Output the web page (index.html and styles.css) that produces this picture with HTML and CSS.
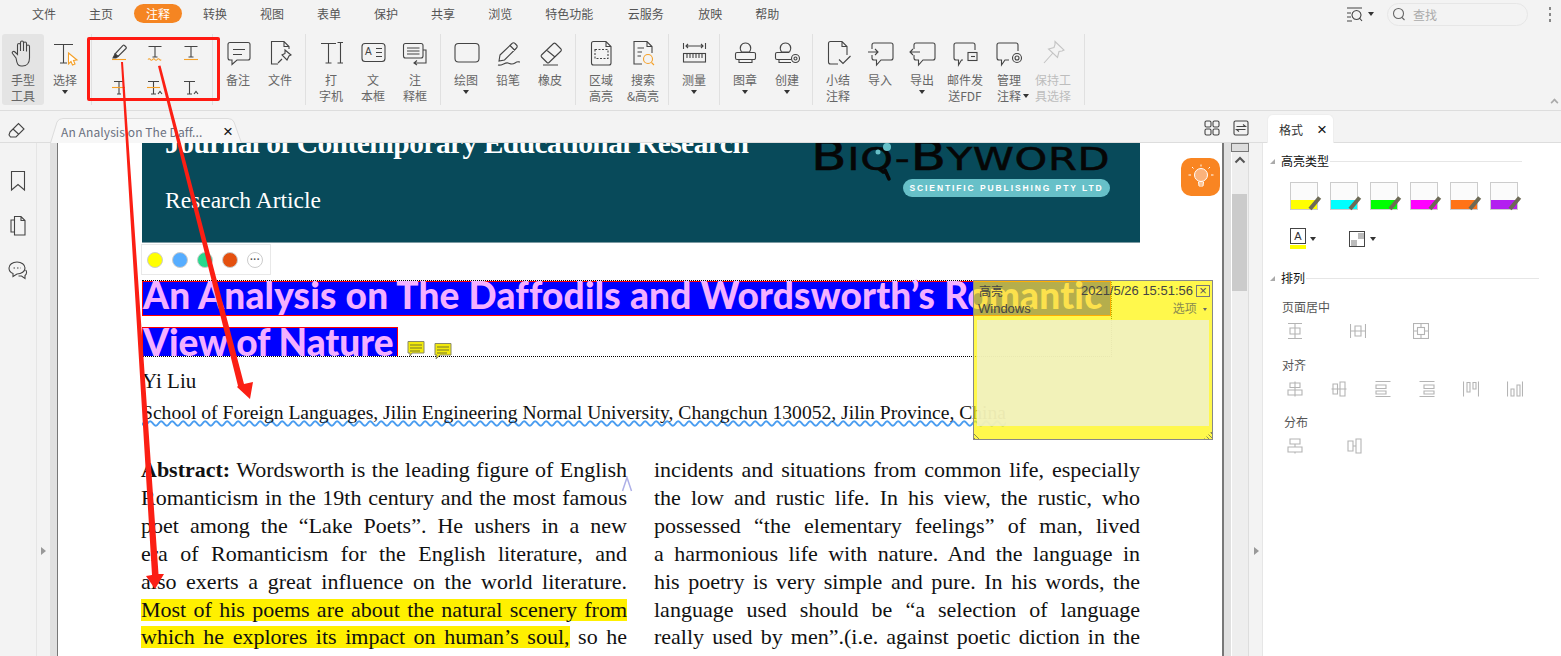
FILE: index.html
```html
<!DOCTYPE html>
<html lang="zh-CN">
<head>
    <meta charset="UTF-8">
    <title>PDF 注释</title>
    <link rel="stylesheet" href="styles.css">
</head>
<body>
    <div class="menu-bar">
        <span class="menu-item">文件</span>
        <span class="menu-item">主页</span>
        <span class="menu-item active">注释</span>
        <span class="menu-item">转换</span>
        <span class="menu-item">视图</span>
        <span class="menu-item">表单</span>
        <span class="menu-item">保护</span>
        <span class="menu-item">共享</span>
        <span class="menu-item">浏览</span>
        <span class="menu-item">特色功能</span>
        <span class="menu-item gap-more">云服务</span>
        <span class="menu-item gap-more">放映</span>
        <span class="menu-item">帮助</span>
        <div class="menu-right">
            <svg class="ico" width="17" height="16" viewBox="0 0 17 16"><path d="M1 2H16M1 7H5M1 11H5M1 15H6M10.500 4.500a4.500 4.500 0 1 0 .01 0M13.500 12L16 15"/></svg>
            <span class="caret"></span>
            <div class="search-box">
                <svg class="ico" width="14" height="14" viewBox="0 0 14 14"><circle cx="6.500" cy="6.500" r="5"/><path d="M10 10.500L12.500 13"/></svg>
                <span>查找</span>
            </div>
            <span class="more-dots"><i></i><i></i><i></i></span>
        </div>
    </div>

    <div class="ribbon">
        <div class="rb-group first">
            <div class="rb-item pressed">
                <svg class="ico" width="32" height="32" viewBox="0 0 32 32"><path d="M9 21L5.500 16.500c-1-1.500 1-3 2.500-1.500L10.500 17.500V8c0-2 3-2 3 0v6V5.500c0-2 3-2 3 0V14V6.500c0-2 3-2 3 0V14.500V9.500c0-2 3-2 3 0V21c0 5-3 8-7 8H14c-3 0-4-2-5-8z"/></svg>
                <span>手型<br>工具</span>
            </div>
            <div class="rb-item">
                <svg class="ico" width="32" height="32" viewBox="0 0 32 32"><path d="M5 7.500H24M14.500 7.500V26M11 26H18"/><path class="orange" fill="#fff" d="M19.500 16L28 23L24.500 23.500L26 27L23.500 28L22 24.500L19.500 27z"/></svg>
                <span>选择</span>
                <span class="caret"></span>
            </div>
        </div>
        <div class="rb-group hl-grid">
            <div class="hl-cell"><svg class="ico" width="24" height="24" viewBox="0 0 24 24"><path d="M8 14L16 5.500a1 1 0 0 1 1.500 0l1.500 1.500a1 1 0 0 1 0 1.500L11 16.500z"/><path fill="#333" d="M6 18L8 14L11 16.500L9 18z"/><path class="orange" d="M5 19.500H19"/></svg></div>
            <div class="hl-cell"><svg class="ico" width="24" height="24" viewBox="0 0 24 24"><path d="M5.500 6.500H18.500M12 6.500V17M9.500 17H14.500"/><path class="orange" d="M5 19.500q1.200-1.500 2.300 0t2.300 0t2.300 0t2.300 0t2.300 0t1.500 0"/></svg></div>
            <div class="hl-cell"><svg class="ico" width="24" height="24" viewBox="0 0 24 24"><path d="M5.500 6.500H18.500M12 6.500V17M9.500 17H14.500"/><path class="orange" d="M5 19.500H19"/></svg></div>
            <div class="hl-cell"><svg class="ico" width="24" height="24" viewBox="0 0 24 24"><path d="M7 5.500H17M12 5.500V18M10 18H14"/><path class="orange" d="M5 11.500H18"/></svg></div>
            <div class="hl-cell"><svg class="ico" width="24" height="24" viewBox="0 0 24 24"><path d="M5 5.500H16M10.500 5.500V18M8 18H13"/><path class="orange" d="M4 11.500H17"/><path d="M15 18L17 15.500L19 18"/></svg></div>
            <div class="hl-cell"><svg class="ico" width="24" height="24" viewBox="0 0 24 24"><path d="M5 5.500H16M10.500 5.500V18M8 18H13"/><path d="M15 18L17 15.500L19 18"/></svg></div>
        </div>
        <div class="rb-group">
            <div class="rb-item">
                <svg class="ico" width="32" height="32" viewBox="0 0 32 32"><path d="M8 5.500H26a2 2 0 0 1 2 2V21a2 2 0 0 1-2 2H15L10 27.500V23H8a2 2 0 0 1-2-2V7.500a2 2 0 0 1 2-2zM11 12.500H23M11 17.500H20"/></svg>
                <span>备注</span>
            </div>
            <div class="rb-item">
                <svg class="ico" width="32" height="32" viewBox="0 0 32 32"><path d="M14 27H7.500V4.500H20l5 5V12M20 4.500V9.500H25"/><path d="M21 13l6 5-2 1-2 4-5-5 3-1.500zM18 22l-4 4"/></svg>
                <span>文件</span>
            </div>
        </div>
        <div class="rb-group">
            <div class="rb-item">
                <svg class="ico" width="32" height="32" viewBox="0 0 32 32"><path d="M6 6.500H21M13.500 6.500V26M10.500 26H16.500M22.500 5.500H28M25.500 5.500V26M22.500 26H28"/></svg>
                <span>打<br>字机</span>
            </div>
            <div class="rb-item">
                <svg class="ico" width="32" height="32" viewBox="0 0 32 32"><rect x="5" y="6.500" width="23" height="18" rx="3"/><path d="M19 11.500H25M19 15.500H25M19 19.500H25"/><text class="ico-letter" x="8" y="18">A</text></svg>
                <span>文<br>本框</span>
            </div>
            <div class="rb-item">
                <svg class="ico" width="32" height="32" viewBox="0 0 32 32"><path d="M6.500 6.500H22a2 2 0 0 1 2 2V19a2 2 0 0 1-2 2H6.500a2 2 0 0 1-2-2V8.500a2 2 0 0 1 2-2zM8 11H20.500M8 14H20.500M8 17H20.500"/><path d="M24 13H27V26H15M18 23.500L15 26L18 28"/></svg>
                <span>注<br>释框</span>
            </div>
        </div>
        <div class="rb-group">
            <div class="rb-item">
                <svg class="ico" width="32" height="32" viewBox="0 0 32 32"><rect x="5" y="6.500" width="24" height="18.500" rx="3.500"/></svg>
                <span>绘图</span>
                <span class="caret"></span>
            </div>
            <div class="rb-item">
                <svg class="ico" width="32" height="32" viewBox="0 0 32 32"><path d="M8 18L20 6.500a2 2 0 0 1 3 0L24.500 8a2 2 0 0 1 0 3L12.500 23L7 24zM18 8.500L23 13.500M6 28c4 1 7-3 10-2s4 2 7 0s3-1 5-1"/></svg>
                <span>铅笔</span>
            </div>
            <div class="rb-item">
                <svg class="ico" width="32" height="32" viewBox="0 0 32 32"><path d="M7.500 18L19.500 6.500a1.500 1.500 0 0 1 2 0L27 12a1.500 1.500 0 0 1 0 2L15 25.500a1.500 1.500 0 0 1-2 0L7.500 20a1.500 1.500 0 0 1 0-2zM12.500 13L21 20M9 28H24"/></svg>
                <span>橡皮</span>
            </div>
        </div>
        <div class="rb-group">
            <div class="rb-item">
                <svg class="ico" width="32" height="32" viewBox="0 0 32 32"><path d="M8.500 4.500H21l5 5V26a2 2 0 0 1-2 2H8.500a2 2 0 0 1-2-2V6.500a2 2 0 0 1 2-2zM21 4.500V9.500H26"/><rect x="10" y="12.500" width="13" height="9" stroke-dasharray="2 1.500"/></svg>
                <span>区域<br>高亮</span>
            </div>
            <div class="rb-item">
                <svg class="ico" width="32" height="32" viewBox="0 0 32 32"><path d="M15 27H7V4.500H20l5 5V16M20 4.500V9.500H25M10.500 11H17M10.500 15H15M10.500 19H14"/><circle class="orange" cx="21" cy="22" r="4.500"/><path class="orange" d="M24.500 25.500L27 28"/></svg>
                <span>搜索<br>&amp;高亮</span>
            </div>
        </div>
        <div class="rb-group">
            <div class="rb-item">
                <svg class="ico" width="32" height="32" viewBox="0 0 32 32"><path d="M5.500 6V12M27.500 6V12M8 9H25M10 7L8 9L10 11M23 7L25 9L23 11"/><rect x="5.500" y="16.500" width="22" height="8.500"/><path d="M9 16.500V21M12 16.500V21M15 16.500V21M18 16.500V21M21 16.500V21M24 16.500V21"/></svg>
                <span>测量</span>
                <span class="caret"></span>
            </div>
        </div>
        <div class="rb-group">
            <div class="rb-item">
                <svg class="ico" width="32" height="32" viewBox="0 0 32 32"><path d="M12.500 15c-3-5 0-9 4-9s7 4 4 9zM8 15.500H25a1.500 1.500 0 0 1 1.500 1.500V21a1.500 1.500 0 0 1-1.500 1.500H8a1.500 1.500 0 0 1-1.500-1.500V17a1.500 1.500 0 0 1 1.500-1.500zM10 22.500V25.500H23V22.500"/></svg>
                <span>图章</span>
                <span class="caret"></span>
            </div>
            <div class="rb-item">
                <svg class="ico" width="32" height="32" viewBox="0 0 32 32"><path d="M10.500 15c-3-5 0-9 4-9s7 4 4 9zM18 15.500H6a1.500 1.500 0 0 0-1.500 1.500V21a1.500 1.500 0 0 0 1.500 1.500H20M8 22.500V25.500H20"/><circle cx="24.500" cy="21.500" r="4"/><circle cx="24.500" cy="21.500" r="1.500"/></svg>
                <span>创建</span>
                <span class="caret"></span>
            </div>
        </div>
        <div class="rb-group last">
            <div class="rb-item">
                <svg class="ico" width="32" height="32" viewBox="0 0 32 32"><path d="M16 27H8.500a2 2 0 0 1-2-2V6.500a2 2 0 0 1 2-2H20l5 5V18M20 4.500V9.500H25M17 22.500L21 26.500L28.500 19"/></svg>
                <span>小结<br>注释</span>
            </div>
            <div class="rb-item">
                <svg class="ico" width="32" height="32" viewBox="0 0 32 32"><path d="M8 12V8a2 2 0 0 1 2-2H27a2 2 0 0 1 2 2V21a2 2 0 0 1-2 2H17L12.500 28V23H10a2 2 0 0 1-2-2V18M4 15H14M11 12L14 15L11 18"/></svg>
                <span>导入</span>
            </div>
            <div class="rb-item">
                <svg class="ico" width="32" height="32" viewBox="0 0 32 32"><path d="M8 12V8a2 2 0 0 1 2-2H27a2 2 0 0 1 2 2V21a2 2 0 0 1-2 2H17L12.500 28V23H10a2 2 0 0 1-2-2V18M4 15H14M7 12L4 15L7 18"/></svg>
                <span>导出</span>
                <span class="caret"></span>
            </div>
            <div class="rb-item wide">
                <svg class="ico" width="32" height="32" viewBox="0 0 32 32"><path d="M14 23H12.500L9.500 28V23H7a2 2 0 0 1-2-2V8a2 2 0 0 1 2-2H24a2 2 0 0 1 2 2V13"/><rect x="19" y="15.500" width="9" height="8"/><path d="M22 19.500H26"/></svg>
                <span>邮件发<br>送FDF</span>
            </div>
            <div class="rb-item wide">
                <svg class="ico" width="32" height="32" viewBox="0 0 32 32"><path d="M16 23H12L8.500 28V23H6a2 2 0 0 1-2-2V8a2 2 0 0 1 2-2H23a2 2 0 0 1 2 2V14"/><circle cx="24" cy="21" r="4.500"/><circle cx="24" cy="21" r="2"/></svg>
                <span>管理<br>注释</span>
                <span class="caret inline"></span>
            </div>
            <div class="rb-item wide disabled">
                <svg class="ico pale" width="32" height="32" viewBox="0 0 32 32"><path d="M18 4.500L27 13L25 14L22 14.500L20.500 20.500L11.500 12L17 10.500L18 7.500zM15.500 16.500L7 26"/></svg>
                <span>保持工<br>具选择</span>
            </div>
        </div>
        <span class="ribbon-collapse"></span>
    </div>

    <div class="tab-row">
        <svg class="ico eraser" width="20" height="20" viewBox="0 0 20 20"><path d="M3 12L11.500 3.500L17 9L9 17H3.500L2 15zM6 9L12 14.500"/></svg>
        <div class="doc-tab">
            <svg class="doc-tab-shape" width="192" height="25" viewBox="0 0 192 25"><path d="M.5 25L7 4Q8.500 .5 13 .5H178Q182.500 .5 184 4L191.500 25"/></svg>
            <span class="doc-tab-title">An Analysis on The Daff...</span>
            <span class="tab-x">×</span>
        </div>
        <div class="tab-row-right">
            <svg class="ico" width="16" height="16" viewBox="0 0 16 16"><rect x="1" y="1" width="6" height="6" rx="1.500"/><rect x="9" y="1" width="6" height="6" rx="1.500"/><rect x="1" y="9" width="6" height="6" rx="1.500"/><rect x="9" y="9" width="6" height="6" rx="1.500"/></svg>
            <svg class="ico" width="16" height="16" viewBox="0 0 16 16"><rect x="1" y="1" width="14" height="14" rx="1.500"/><path d="M3.500 6.500H12.500L10 4.500M12.500 9.500H3.500L6 11.500"/></svg>
            <div class="side-tab"><span>格式</span><span class="tab-x">×</span></div>
        </div>
    </div>

    <div class="main">
        <div class="left-rail">
            <svg class="ico" width="18" height="22" viewBox="0 0 18 22"><path d="M2.500 1.500H15.500V20L9 14.500L2.500 20z"/></svg>
            <svg class="ico" width="18" height="22" viewBox="0 0 18 22"><path d="M5.500 17H2V5H5.500M5.500 1.500H12L16 5.500V20H5.500zM12 1.500V5.500H16"/></svg>
            <svg class="ico" width="20" height="20" viewBox="0 0 20 20"><path d="M9 2c4.500 0 8 2.500 8 6s-3.500 6-8 6L5 16.500V13.500C2.500 12.500 1 10.500 1 8C1 4.500 4.500 2 9 2zM17.500 10c1.500 1 1.500 4-.5 5.500V18.500L13.500 16H10.500"/><path stroke-dasharray="1.500 2" d="M5.500 8H13"/></svg>
        </div>
        <div class="side-handle"><span class="tri"></span></div>
        <div class="gutter"></div>

        <div class="page">
            <div class="banner">
                <div class="banner-left">
                    <div class="journal-title">Journal of Contemporary Educational Research</div>
                    <div class="article-type">Research Article</div>
                </div>
                <div class="banner-logo">
                    <div class="logo-name"><b>B</b>IQ-<b>B</b>YWORD</div>
                    <div class="logo-pill">SCIENTIFIC PUBLISHING PTY LTD</div>
                </div>
            </div>

            <svg class="logo-lens" width="30" height="42" viewBox="0 0 30 42"><circle cx="17" cy="4" r="4" fill="#67c0c8"/><circle cx="8" cy="9" r="2.500" fill="#67c0c8"/><path d="M15 27L19 36" stroke="#060606" stroke-width="3.500" stroke-linecap="round"/></svg>

            <div class="title-box">
                <div class="title-line full">An Analysis on The Daffodils and Wordsworth’s Romantic</div>
                <div class="title-row2">
                    <div class="title-line">View of Nature</div>
                    <svg class="note-mark" width="20" height="18" viewBox="0 0 20 18"><path d="M2 1.500H18V13H6L4 16V13H2z"/><path class="note-lines" d="M4 5H16M4 8H16M4 11H14"/></svg>
                    <svg class="note-mark second" width="20" height="18" viewBox="0 0 20 18"><path d="M2 1.500H18V13H7L3 17L4 13H2z"/><path class="note-lines" d="M4 5H16M4 8H16M4 11H14"/></svg>
                </div>
            </div>

            <div class="author">Yi Liu</div>
            <div class="affil">School of Foreign Languages, Jilin Engineering Normal University, Changchun 130052, Jilin Province, China</div>

            <div class="columns">
                <div class="col">
                    <div class="ln"><b>Abstract:</b> Wordsworth is the leading figure of English</div>
                    <div class="ln">Romanticism in the 19th century and the most famous</div>
                    <div class="ln">poet among the “Lake Poets”. He ushers in a new</div>
                    <div class="ln">era of Romanticism for the English literature, and</div>
                    <div class="ln">also exerts a great influence on the world literature.</div>
                    <div class="ln"><span class="hl">Most of his poems are about the natural scenery from</span></div>
                    <div class="ln"><span class="hl">which he explores its impact on human’s soul,</span> so he</div>
                </div>
                <div class="col">
                    <div class="ln">incidents and situations from common life, especially</div>
                    <div class="ln">the low and rustic life. In his view, the rustic, who</div>
                    <div class="ln">possessed “the elementary feelings” of man, lived</div>
                    <div class="ln">a harmonious life with nature. And the language in</div>
                    <div class="ln">his poetry is very simple and pure. In his words, the</div>
                    <div class="ln">language used should be “a selection of language</div>
                    <div class="ln">really used by men”.(i.e. against poetic diction in the</div>
                </div>
            </div>

            <div class="color-chips">
                <span class="chip c-yellow"></span>
                <span class="chip c-blue"></span>
                <span class="chip c-green"></span>
                <span class="chip c-red"></span>
                <span class="chip c-more">···</span>
            </div>

            <div class="bulb-btn">
                <svg width="30" height="30" viewBox="0 0 30 30"><circle cx="15" cy="13" r="6.500" fill="#fbb27a" stroke="#fff"/><path d="M12.500 20H17.500L17 24H13zM13 22H17M15 2.500V4.500M6 5L7.500 6.500M24 5L22.500 6.500M2.500 13H5M25 13H27.500" fill="none" stroke="#fff"/></svg>
            </div>

            <svg class="insert-mark" width="12" height="16" viewBox="0 0 12 16"><path d="M1.500 15L6 1.500L10.500 15" fill="none" stroke="#aeb0e8" stroke-width="1.500"/></svg>

            <div class="popup-note">
                <div class="note-head">
                    <div class="note-head-top"><span>高亮</span><span class="note-date">2021/5/26 15:51:56</span><span class="note-close">×</span></div>
                    <div class="note-head-sub"><span>Windows</span><span class="note-opts">选项 <i class="caret"></i></span></div>
                </div>
                <div class="note-body"></div>
            </div>
        </div>

        <div class="gutter right"></div>
        <div class="vscroll">
            <span class="vs-top"></span>
            <svg class="vs-up" width="12" height="8" viewBox="0 0 12 8"><path d="M1.500 6.500L6 2L10.500 6.500" fill="none" stroke="#555" stroke-width="2"/></svg>
            <div class="vs-thumb"></div>
        </div>
        <div class="side-handle alt"><span class="tri"></span></div>

        <div class="panel">
            <div class="sec-head"><span class="sec-tri"></span><span class="sec-title">高亮类型</span><span class="sec-line short"></span></div>
            <div class="swatches">
                <div class="swatch"><i class="sw-yellow"></i></div>
                <div class="swatch"><i class="sw-cyan"></i></div>
                <div class="swatch"><i class="sw-lime"></i></div>
                <div class="swatch"><i class="sw-pink"></i></div>
                <div class="swatch"><i class="sw-orange"></i></div>
                <div class="swatch"><i class="sw-purple"></i></div>
            </div>
            <div class="text-tools">
                <div class="a-tool"><span class="a-box">A</span><span class="a-bar"></span></div>
                <span class="caret"></span>
                <div class="shade-tool"><i></i><i></i></div>
                <span class="caret"></span>
            </div>

            <div class="sec-head arrange"><span class="sec-tri"></span><span class="sec-title">排列</span><span class="sec-line"></span></div>
            <div class="sub-title">页面居中</div>
            <div class="align-row page-center">
                <svg class="ico grey" width="16" height="16" viewBox="0 0 16 16"><path d="M1 .5H15M1 15.500H15M8 .5V15.500M3 5H13V11H3z"/></svg>
                <svg class="ico grey" width="16" height="16" viewBox="0 0 16 16"><path d="M.5 1V15M15.500 1V15M.5 8H15.500M5 3H11V13H5z"/></svg>
                <svg class="ico grey" width="16" height="16" viewBox="0 0 16 16"><rect x=".5" y=".5" width="15" height="15"/><rect x="4.500" y="4.500" width="7" height="7"/><path d="M8 .5V4.500M8 11.500V15.500M.5 8H4.500M11.500 8H15.500"/></svg>
            </div>
            <div class="sub-title second">对齐</div>
            <div class="align-row six">
                <svg class="ico grey" width="16" height="16" viewBox="0 0 16 16"><path d="M8 .5V15.500M3 2H13V6.500H3zM1 9H15V14H1z"/></svg>
                <svg class="ico grey" width="16" height="16" viewBox="0 0 16 16"><path d="M.5 8H15.500M2 3H6.500V13H2zM9 1H14V15H9z"/></svg>
                <svg class="ico grey" width="16" height="16" viewBox="0 0 16 16"><path d="M.5 .5H15.500M.5 15.500H15.500M1 4H11V7.500H1zM1 10H11V13H1z"/></svg>
                <svg class="ico grey" width="16" height="16" viewBox="0 0 16 16"><path d="M.5 .5H15.500M.5 15.500H15.500M5 4H15V7.500H5zM5 10H15V13H5z"/></svg>
                <svg class="ico grey" width="16" height="16" viewBox="0 0 16 16"><path d="M.5 .5V15.500M15.500 .5V15.500M4 1.500H7V11H4zM10 1.500H13V8H10z"/></svg>
                <svg class="ico grey" width="16" height="16" viewBox="0 0 16 16"><path d="M.5 .5V15.500M15.500 .5V15.500M4 8H7V15H4zM10 4H13V15H10z"/></svg>
            </div>
            <div class="sub-title dist">分布</div>
            <div class="align-row dist-row">
                <svg class="ico grey" width="16" height="16" viewBox="0 0 16 16"><path d="M3 1H13V6H3zM1 9H15V14H1zM8 6V9M8 14V15.500"/></svg>
                <svg class="ico grey" width="16" height="16" viewBox="0 0 16 16"><path d="M1 3H6V13H1zM9 1H14V15H9zM6 8H9"/></svg>
            </div>
        </div>
    </div>

    <!-- red marks drawn over the whole screenshot -->
    <div class="red-box"></div>
    <svg class="red-arrows" width="1561" height="656" viewBox="0 0 1561 656">
        <path d="M121 62L123 62L158.500 574L164 574L155 589L146 576L152 575z"/>
        <path d="M158 66L160.500 65.500L244 384L253 382L250 399L237 387L238 386z"/>
    </svg>
</body>
</html>
```

FILE: styles.css
```css
* {
    box-sizing: border-box;
}
html, body {
    margin: 0;
    height: 656px;
    overflow: hidden;
}
body {
    position: relative;
    display: flex;
    flex-direction: column;
    background-color: #f3f3f3;
    color: #555;
    font-family: "Noto Sans CJK SC", "Liberation Sans", sans-serif;
    font-size: 12px;
}
.ico {
    display: block;
    flex-shrink: 0;
    fill: none;
    stroke: #444;
    stroke-width: 1.1;
}
.ico .orange {
    stroke: #f5a028;
}
.ico.pale {
    stroke: #c4c4c4;
}
.ico.grey {
    stroke: #b4b4b4;
}
.ico-letter {
    font: 10px "Liberation Sans", sans-serif;
    fill: #444;
    stroke: none;
}
.caret {
    display: inline-block;
    width: 0;
    height: 0;
    border-left: 3.5px solid transparent;
    border-right: 3.5px solid transparent;
    border-top: 4px solid #333;
}

/* menu */
.menu-bar {
    height: 28px;
    display: flex;
    align-items: center;
    gap: 33px;
    padding: 0 0 2px 32px;
    flex-shrink: 0;
}
.menu-item {
    line-height: 19px;
}
.menu-item.active {
    background-color: #f58522;
    color: #fff;
    border-radius: 10px;
    padding: 0 12px;
    margin: 0 -12px;
}
.menu-item.gap-more {
    margin-left: 1.500px;
}
.menu-right {
    margin-left: auto;
    display: flex;
    align-items: center;
    padding: 2px 10px 0 0;
}
.menu-right .caret {
    margin-left: 5px;
}
.search-box {
    width: 141px;
    height: 23px;
    margin-left: 13px;
    border: 1px solid #e6e6e6;
    border-radius: 12px;
    display: flex;
    align-items: center;
    gap: 7px;
    padding-left: 4px;
    color: #aaa;
}
.search-box .ico {
    stroke: #666;
}
.more-dots {
    display: flex;
    flex-direction: column;
    gap: 3px;
    margin-left: 21px;
}
.more-dots i {
    width: 2px;
    height: 3px;
    background-color: #888;
}

/* ribbon */
.ribbon {
    height: 83px;
    flex-shrink: 0;
    display: flex;
    align-items: flex-start;
    padding: 6px 0 0 2px;
    border-bottom: 1px solid #ddd;
    position: relative;
    color: #666;
}
.rb-group {
    display: flex;
    height: 71px;
    padding: 0 4px;
    border-right: 1px solid #e0e0e0;
}
.rb-group.first {
    padding: 0 5px 0 0;
}
.rb-group.last {
    padding-right: 9px;
}
.rb-item {
    width: 42px;
    height: 71px;
    padding-top: 3px;
    display: flex;
    flex-direction: column;
    align-items: center;
    line-height: 16px;
    text-align: center;
    flex-shrink: 0;
}
.rb-item > span:not(.caret) {
    margin-top: 3px;
    white-space: nowrap;
}
.rb-item > .caret {
    margin-top: 2px;
}
.rb-item > .caret.inline {
    position: absolute;
    margin: 57px 0 0 33px;
}
.rb-item.wide {
    width: 44px;
}
.rb-item.pressed {
    background-color: #e4e4e4;
    border-radius: 3px;
}
.rb-item.disabled {
    color: #bdbdbd;
}
.hl-grid {
    width: 121px;
    padding: 0 0 0 9px;
    display: grid;
    grid-template-columns: repeat(3, 36px);
    grid-template-rows: repeat(2, 36px);
}
.hl-cell {
    display: flex;
    align-items: center;
    justify-content: center;
    margin-top: -1px;
}
.ribbon-collapse {
    position: absolute;
    right: 3px;
    bottom: 4px;
    width: 7px;
    height: 7px;
    border-left: 2px solid #aaa;
    border-top: 2px solid #aaa;
    transform: rotate(45deg) scale(.8);
}

/* tab row */
.tab-row {
    height: 32px;
    flex-shrink: 0;
    display: flex;
    align-items: flex-end;
    border-bottom: 1px solid #ddd;
    position: relative;
}
.eraser {
    position: absolute;
    left: 7px;
    top: 9px;
}
.doc-tab {
    position: relative;
    width: 192px;
    height: 25px;
    margin-left: 50px;
    margin-bottom: -1px;
    display: flex;
    align-items: center;
    padding: 2px 0 0 11px;
    color: #6a7080;
    white-space: nowrap;
}
.doc-tab-shape {
    position: absolute;
    left: 0;
    top: 0;
    fill: #f7f7f7;
    stroke: #dcdcdc;
}
.doc-tab-title {
    position: relative;
    letter-spacing: .1px;
}
.tab-x {
    position: relative;
    font-family: "Liberation Sans", sans-serif;
    font-size: 17px;
    line-height: 1;
    color: #111;
    margin-left: auto;
    margin-right: 9px;
}
.tab-row-right {
    margin-left: auto;
    display: flex;
    align-items: center;
    padding: 3px 227px 0 0;
    height: 100%;
    gap: 13px;
}
.side-tab {
    width: 67px;
    height: 29px;
    align-self: flex-end;
    margin-left: 5px;
    margin-bottom: -1px;
    background-color: #fff;
    border-radius: 6px 6px 0 0;
    border: 1px solid #eee;
    border-bottom: none;
    display: flex;
    align-items: center;
    padding-left: 11px;
    color: #333;
}
.side-tab .tab-x {
    margin-right: 6px;
}

/* main area */
.main {
    flex: 1;
    display: flex;
    min-height: 0;
}
.left-rail {
    width: 37px;
    flex-shrink: 0;
    border-right: 1px solid #e5e5e5;
    display: flex;
    flex-direction: column;
    align-items: center;
    gap: 23px;
    padding-top: 27px;
}
.side-handle {
    width: 13px;
    flex-shrink: 0;
    display: flex;
    align-items: center;
    justify-content: center;
    padding-top: 312px;
    padding-bottom: 10px;
}
.side-handle.alt {
    border-right: 1px solid #e6e6e6;
    width: 14px;
    padding-left: 1px;
}
.tri {
    width: 0;
    height: 0;
    border-top: 4px solid transparent;
    border-bottom: 4px solid transparent;
    border-left: 5px solid #999;
}
.gutter {
    width: 7px;
    flex-shrink: 0;
    background-color: #e0e0e0;
}
.gutter.right {
    width: 8px;
    border-right: 1px solid #fff;
}
.page {
    width: 1167px;
    flex-shrink: 0;
    position: relative;
    overflow: hidden;
    background-color: #fff;
    border-left: 1px solid #777;
    border-right: 2px solid #777;
    padding-left: 84px;
    font-family: "Liberation Serif", serif;
    color: #111;
}
.banner {
    width: 998px;
    height: 100px;
    background-color: #084a5a;
    border-bottom: 1px solid #7c9aa2;
    display: flex;
    justify-content: space-between;
    color: #fff;
    overflow: hidden;
}
.banner-left {
    padding-left: 23px;
}
.journal-title {
    font-size: 29.500px;
    letter-spacing: -.55px;
    font-weight: bold;
    line-height: 34px;
    margin-top: -17px;
    white-space: nowrap;
}
.article-type {
    font-size: 23.500px;
    line-height: 28px;
    margin-top: 26px;
}
.banner-logo {
    width: 295px;
    margin-right: 30px;
    display: flex;
    flex-direction: column;
    align-items: flex-end;
}
.logo-name {
    font-family: "DejaVu Sans", sans-serif;
    font-size: 32px;
    line-height: 34px;
    margin-top: -4px;
    color: #060606;
    white-space: nowrap;
    letter-spacing: .5px;
    transform: scaleX(1.3);
    transform-origin: right center;
    -webkit-text-stroke: .5px #060606;
}
.logo-name b {
    font-weight: normal;
    font-size: 40px;
}
.logo-pill {
    width: 207px;
    height: 18px;
    margin-top: 3px;
    border-radius: 9px;
    background-color: #67c0c8;
    color: #fff;
    font: bold 8.500px/18px "Liberation Sans", sans-serif;
    letter-spacing: 1.900px;
    text-align: center;
    white-space: nowrap;
}
.logo-lens {
    position: absolute;
    left: 812px;
    top: 0;
}
.title-box {
    width: 970px;
    height: 77px;
    margin-top: 37px;
    border-top: 1px dotted #000;
    border-bottom: 1px dotted #000;
    border-right: 1px dotted #000;
    font-family: "Lato", sans-serif;
    font-weight: 900;
    font-size: 37px;
    color: #f3b0ff;
}
.title-line {
    background-color: #00f;
    border: 1px solid #f00;
    line-height: 25px;
    height: 35px;
    white-space: nowrap;
}
.title-line.full {
    width: 969px;
    letter-spacing: .2px;
}
.title-row2 {
    display: flex;
    align-items: flex-end;
    margin-top: 11px;
}
.title-row2 .title-line {
    width: 256px;
    height: 29px;
    line-height: 27px;
    border-bottom: none;
}
.note-mark {
    fill: #f2ea0c;
    stroke: #8a8a6a;
    stroke-width: 1;
    margin-left: 8px;
    margin-bottom: -2px;
}
.note-mark.second {
    margin-left: 7px;
    margin-bottom: -4px;
}
.note-lines {
    stroke: #77772a;
    fill: none;
}
.author {
    font-size: 21px;
    line-height: 24px;
    margin-top: 12px;
}
.affil {
    font-size: 19.600px;
    line-height: 24px;
    margin-top: 8px;
    white-space: nowrap;
    width: 863px;
    text-decoration: underline wavy #4a9df0 1.500px;
    text-decoration-skip-ink: none;
    text-underline-offset: 1px;
}
.columns {
    width: 999px;
    display: grid;
    grid-template-columns: 486px 486px;
    column-gap: 27px;
    margin: 31px 0 0 -1px;
    font-size: 22px;
    line-height: 27.900px;
}
.ln {
    text-align: justify;
    text-align-last: justify;
}
.hl {
    background: linear-gradient(transparent 2px, #fff000 2px, #fff000 24px, transparent 24px);
}
.color-chips {
    position: absolute;
    left: 83px;
    top: 101px;
    width: 130px;
    height: 31px;
    background-color: #fff;
    border: 1px solid #e8e8e8;
    display: flex;
    align-items: center;
    gap: 9px;
    padding-left: 5px;
}
.chip {
    width: 16px;
    height: 16px;
    border-radius: 50%;
    border: 1px solid #ccc;
}
.c-yellow { background-color: #ff0; }
.c-blue { background-color: #56adff; }
.c-green { background-color: #27d98e; }
.c-red { background-color: #e4500f; }
.c-more {
    background-color: #fff;
    font: bold 10px/13px "Liberation Sans", sans-serif;
    color: #555;
    text-align: center;
}
.bulb-btn {
    position: absolute;
    left: 1123px;
    top: 15px;
    width: 39px;
    height: 38px;
    border-radius: 10px;
    background-color: #f98522;
    display: flex;
    align-items: center;
    justify-content: center;
}
.insert-mark {
    position: absolute;
    left: 563px;
    top: 333px;
}
.popup-note {
    position: absolute;
    left: 915px;
    top: 137px;
    width: 240px;
    height: 160px;
    background-color: rgba(255, 245, 3, .71);
    border: 1px solid #888;
    padding: 0 3px;
    font: 12px "Noto Sans CJK SC", "Liberation Sans", sans-serif;
    color: #444;
}
.popup-note::before, .popup-note::after {
    content: "";
    position: absolute;
    bottom: 0;
    width: 8px;
    height: 8px;
    background: repeating-linear-gradient(45deg, #8a8a50 0 1px, transparent 1px 3px);
}
.popup-note::before {
    left: 0;
    clip-path: polygon(0 0, 100% 100%, 0 100%);
}
.popup-note::after {
    right: 0;
    clip-path: polygon(100% 0, 100% 100%, 0 100%);
}
.note-head {
    height: 38px;
}
.note-head-top, .note-head-sub {
    display: flex;
    align-items: center;
    padding-left: 2px;
    line-height: 18px;
}
.note-head-top {
    height: 19px;
}
.note-date {
    margin-left: auto;
    font: 13px "Liberation Sans", sans-serif;
}
.note-close {
    width: 14px;
    height: 12px;
    margin: 0 -1px 0 3px;
    border: 1px solid #777;
    font: 13px/10px "Liberation Sans", sans-serif;
    text-align: center;
    color: #555;
}
.note-head-sub {
    height: 18px;
    font-family: "Liberation Sans", "Noto Sans CJK SC", sans-serif;
    font-size: 13px;
    padding-left: 1px;
}
.note-opts {
    margin-left: auto;
    font-size: 12px;
    color: #8a8a50;
    padding-right: 2px;
}
.note-opts .caret {
    border-top-color: #666;
    border-left-width: 2.500px;
    border-right-width: 2.500px;
    border-top-width: 3px;
    vertical-align: middle;
    margin-left: 3px;
}
.note-body {
    height: 106px;
    margin-top: 1px;
    background-color: rgba(240, 240, 200, .88);
}
.vscroll {
    width: 17px;
    flex-shrink: 0;
    background-color: #eee;
    border-right: 1px solid #ddd;
    position: relative;
}
.vs-top {
    position: absolute;
    left: -1px;
    top: 0;
    width: 18px;
    height: 9px;
    background-color: #ddd;
    border: 1px solid #777;
}
.vs-up {
    position: absolute;
    left: 2px;
    top: 13px;
}
.vs-thumb {
    position: absolute;
    left: 0;
    top: 51px;
    width: 15px;
    height: 97px;
    background-color: #cbcbcb;
}

/* right panel */
.panel {
    flex: 1;
    background-color: #fff;
    padding: 10px 0 0 7px;
    color: #555;
}
.sec-head {
    display: flex;
    align-items: center;
    height: 16px;
    color: #111;
}
.sec-tri {
    width: 0;
    height: 0;
    border-bottom: 5px solid #aaa;
    border-left: 5px solid transparent;
    margin-right: 6px;
}
.sec-title {
    line-height: 16px;
    margin-right: 1px;
}
.sec-line {
    height: 1px;
    width: 233px;
    background-color: #e6e6e6;
}
.sec-line.short {
    width: 192px;
}
.swatches {
    display: flex;
    gap: 12px;
    margin: 13px 0 0 20px;
}
.swatch {
    position: relative;
    width: 28px;
    height: 28px;
    border: 1px solid #ccc;
    display: flex;
    align-items: flex-end;
    background-color: #fbfbfb;
}
.swatch i {
    width: 100%;
    height: 9px;
}
.swatch::after {
    content: "";
    position: absolute;
    right: 5px;
    bottom: 0;
    width: 4px;
    height: 15px;
    background-color: #6d6a55;
    transform: rotate(40deg);
    transform-origin: bottom center;
}
.sw-yellow { background-color: #ff0; }
.sw-cyan { background-color: #0ff; }
.sw-lime { background-color: #0f0; }
.sw-pink { background-color: #f0f; }
.sw-orange { background-color: #ff7316; }
.sw-purple { background-color: #b31ff0; }
.text-tools {
    display: flex;
    align-items: center;
    margin: 18px 0 0 20px;
    height: 21px;
}
.a-tool {
    width: 16px;
    margin-right: 4px;
}
.a-box {
    display: block;
    height: 16px;
    border: 1px solid #444;
    font: 11px/14px "Liberation Sans", sans-serif;
    text-align: center;
    color: #333;
}
.a-bar {
    display: block;
    height: 4px;
    margin-top: 1px;
    background-color: #ff0;
}
.shade-tool {
    width: 16px;
    height: 16px;
    margin: 0 5px 0 33px;
    border: 1px solid #444;
    position: relative;
}
.shade-tool i {
    position: absolute;
    width: 6px;
    height: 6px;
    background-color: #bbb;
}
.shade-tool i:first-child {
    right: 0;
    top: 1px;
}
.shade-tool i:last-child {
    left: 1px;
    bottom: 0;
}
.arrange {
    margin-top: 21px;
}
.sub-title {
    line-height: 16px;
    margin: 13px 0 0 12px;
}
.sub-title.second {
    margin-top: 18px;
}
.sub-title.dist {
    margin-left: 14px;
    margin-top: 17px;
}
.align-row {
    display: flex;
    margin: 8px 0 0 17px;
    gap: 28px;
}
.page-center {
    gap: 47px;
}
.dist-row {
    gap: 44px;
}

/* marks on top of everything */
.red-box {
    position: absolute;
    left: 87px;
    top: 37px;
    width: 133px;
    height: 64px;
    border: 3px solid #ff1a12;
    border-radius: 2px;
}
.red-arrows {
    position: absolute;
    left: 0;
    top: 0;
    fill: #fb1f14;
    pointer-events: none;
}
```
